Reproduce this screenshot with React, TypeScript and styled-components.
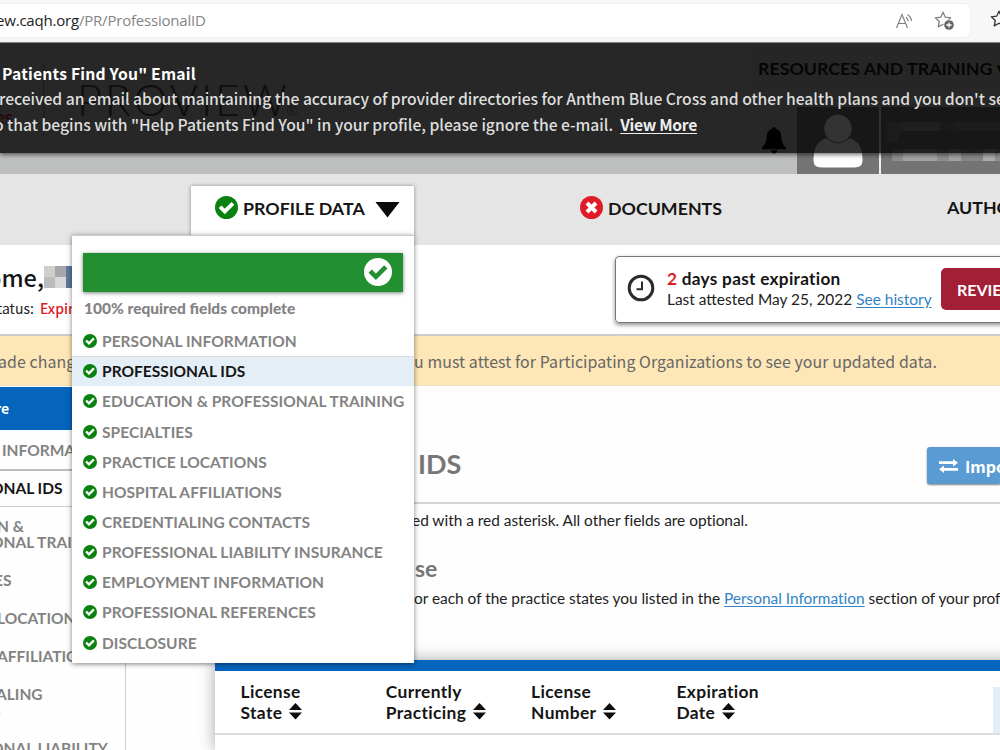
import React from "react";
import styled, { createGlobalStyle, css } from "styled-components";

const GlobalStyle = createGlobalStyle`
  * { box-sizing: border-box; }
  html, body { margin: 0; padding: 0; overflow: hidden; background: #fefefe; }
  body { font-family: Lato, "Liberation Sans", sans-serif; color: #222; }
  svg { flex: none; }
`;

const sourceSans = css`
  font-family: "Noto Sans CJK JP", "Open Sans", sans-serif;
`;

const Page = styled.div`
  width: 1000px;
  height: 750px;
  overflow: hidden;
  display: flex;
  flex-direction: column;
`;

/* Browser chrome */
const BrowserBar = styled.div`
  height: 42px;
  flex: none;
  background: #f7f7f7;
  display: flex;
  align-items: flex-start;
  padding-top: 4px;
`;
const AddressField = styled.div`
  width: 970px;
  height: 33px;
  background: #fff;
  border-radius: 0 5px 5px 0;
  box-shadow: 0 0 2px #ddd;
  display: flex;
  align-items: center;
  justify-content: space-between;
  padding-right: 15px;
`;
const Url = styled.div`
  font: 15px/20px "Open Sans", sans-serif;
  letter-spacing: -0.2px;
  color: #858585;
  margin: 0 0 2px -4px;
  white-space: pre;
  b { font-weight: 400; color: #222; }
`;
const FieldIcons = styled.div`
  display: flex;
  align-items: center;
  gap: 19px;
`;
const EdgeStar = styled.div`
  margin: 6px 0 0 20px;
  width: 10px;
  overflow: hidden;
`;

/* Site header with announcement */
const Header = styled.header`
  position: relative;
  height: 132px;
  flex: none;
  background: #bdc0bf;
  display: flex;
  justify-content: space-between;
  border-top: 1px solid #8b8e8d;
`;
const Brand = styled.div`
  display: flex;
  align-items: flex-start;
`;
const BrandTail = styled.div`
  width: 44px;
  height: 74px;
  margin-top: 20px;
  padding-top: 42px;
  border-right: 1px solid #8a8c8c;
  font: 700 18px/24px Lato, sans-serif;
  color: #a03028;
  text-indent: -5px;
`;
const BrandName = styled.div`
  margin: 34px 0 0 33px;
  font: 300 43px/46px Lato, sans-serif;
  letter-spacing: 2.9px;
  color: #484848;
  white-space: nowrap;
  sup { font-size: 14px; line-height: 0; vertical-align: 0; letter-spacing: 0; margin-left: -3px; }
`;
const HeaderRight = styled.div`
  width: 250px;
  flex: none;
  display: flex;
  flex-direction: column;
  justify-content: space-between;
`;
const Resources = styled.div`
  height: 42px;
  margin-top: 4px;
  padding: 10px 0 0 8px;
  background: #bebebe;
  font: 700 17.8px/22px Lato, sans-serif;
  color: #1c1c1c;
  white-space: nowrap;
`;
const UserArea = styled.div`
  height: 67px;
  display: flex;
`;
const BellBox = styled.div`
  width: 47px;
  flex: none;
  padding: 20px 0 0 11px;
`;
const AvatarBox = styled.div`
  width: 82px;
  flex: none;
  background: #747474;
  display: flex;
  justify-content: center;
  padding-top: 7px;
`;
const AccountBox = styled.div`
  flex: 1;
  min-width: 0;
  overflow: hidden;
  background: #747474;
  padding: 15px 0 0 6px;
`;
const Redacted = styled.div`
  display: flex;
  flex-wrap: wrap;
  width: 120px;
`;
const Block = styled.i<{ $w: number; $h: number; $c: string }>`
  width: ${(p) => p.$w}px;
  height: ${(p) => p.$h}px;
  background: ${(p) => p.$c};
`;
const Divider = styled.div`
  width: 2px;
  flex: none;
  background: #eee;
`;
const Announcement = styled.div`
  position: absolute;
  left: 0;
  right: 0;
  top: 0;
  height: 110px;
  padding: 17.5px 0 0;
  background: rgba(0, 0, 0, 0.8);
  box-shadow: 0 2px 4px rgba(0, 0, 0, 0.5);
  ${sourceSans}
  font-size: 15.7px;
  line-height: 25.9px;
  color: #dedede;
  white-space: pre;
`;
const AnnounceTitle = styled.div`
  font-weight: 700;
  color: #fff;
  padding-left: 2px;
  letter-spacing: 0.2px;
`;
const AnnounceLine = styled.div<{ $x: number }>`
  margin-left: ${(p) => p.$x}px;
  letter-spacing: -0.035px;
  font-weight: 500;
  a { font-weight: 700; color: #eee; letter-spacing: -0.3px; text-decoration: underline; text-underline-offset: 2px; }
`;

/* Primary navigation */
const Nav = styled.nav`
  position: relative;
  height: 71px;
  flex: none;
  background: #e5e5e5;
  display: flex;
  align-items: flex-start;
  font-size: 17.8px;
  line-height: 24px;
  font-weight: 700;
  color: #151515;
`;
const Tab = styled.div`
  margin: 12px 0 0 191px;
  width: 223px;
  flex: none;
  height: 50px;
  background: #fff;
  box-shadow: 0 0 4px rgba(0, 0, 0, 0.4);
  display: flex;
  align-items: flex-start;
  padding: 10px 0 0 24px;
`;
const TabLabel = styled.span`
  margin-left: 5px;
  width: 132px;
  white-space: nowrap;
`;
const NavItem = styled.div<{ $ml: number; $mt: number }>`
  margin: ${(p) => p.$mt}px 0 0 ${(p) => p.$ml}px;
  flex: none;
  display: flex;
  gap: 5px;
  white-space: nowrap;
`;

/* Dropdown */
const Menu = styled.div`
  position: absolute;
  z-index: 2;
  left: 72px;
  top: 61px;
  width: 342px;
  height: 428px;
  background: #fff;
  border-top: 1px solid #ccc;
  box-shadow: 0 1px 5px rgba(0, 0, 0, 0.5);
  padding-top: 17px;
`;
const Progress = styled.div`
  width: 320px;
  height: 39px;
  margin-left: 11px;
  background: #228f30;
  box-shadow: 0 1px 4px rgba(0, 0, 0, 0.5);
  display: flex;
  align-items: center;
  justify-content: flex-end;
  padding: 0 11px 1px 0;
`;
const ProgressText = styled.div`
  margin: 6px 0 11px 12px;
  font-size: 15.5px;
  line-height: 20px;
  color: #838383;
  height: 17px;
  white-space: nowrap;
`;
const MenuItem = styled.div<{ $active?: boolean }>`
  height: 30.17px;
  display: flex;
  align-items: center;
  gap: 5px;
  padding-left: 11px;
  font-size: 15.5px;
  letter-spacing: 0.04px;
  font-weight: 700;
  white-space: nowrap;
  color: ${(p) => (p.$active ? "#151515" : "#838383")};
  background: ${(p) => (p.$active ? "#e4eef7" : "transparent")};
  box-shadow: ${(p) => (p.$active ? "inset 0 1px #d8dde2" : "none")};
`;

/* Welcome strip */
const Welcome = styled.section`
  height: 91px;
  flex: none;
  background: #fff;
  border-bottom: 2px solid #ccc;
  display: flex;
  justify-content: space-between;
`;
const Greeting = styled.div`
  ${sourceSans}
  padding-top: 15px;
  white-space: nowrap;
`;
const Name = styled.div`
  display: flex;
  align-items: center;
  margin-left: -13px;
  height: 34px;
  font-size: 23.5px;
  font-weight: 500;
  color: #151515;
`;
const Status = styled.div`
  font-size: 14px;
  line-height: 20px;
  height: 24px;
  padding-top: 4px;
  margin-left: -3px;
  b { font-weight: 500; color: #dc1c28; margin-left: 3px; }
`;
const Mosaic = styled.div`
  display: flex;
  flex-wrap: wrap;
  width: 33px;
`;
const AttestCard = styled.div`
  width: 400px;
  height: 67px;
  margin: 11px -15px 0 0;
  border: 1px solid #777;
  border-radius: 4px;
  box-shadow: 0 2px 4px rgba(0, 0, 0, 0.45);
  display: flex;
  padding-left: 11px;
`;
const ClockWrap = styled.div`
  padding-top: 17px;
  width: 40px;
  flex: none;
`;
const AttestText = styled.div`
  width: 274px;
  flex: none;
  padding-top: 11px;
  font-size: 15.45px;
  line-height: 21px;
  white-space: nowrap;
`;
const Past = styled.div`
  font-size: 17.2px;
  letter-spacing: 0.3px;
  font-weight: 700;
  color: #151515;
  em { font-style: normal; color: #dc1c28; }
`;
const Link = styled.a`
  color: #3383c6;
  text-decoration: underline;
  text-underline-offset: 2px;
`;
const ReviewButton = styled.div`
  flex: 1;
  height: 42px;
  margin-top: 11px;
  background: #a31f35;
  border-radius: 5px;
  padding-left: 16px;
  font: 700 16px/43px Lato, sans-serif;
  color: #fff;
`;
const Warning = styled.div`
  height: 50px;
  flex: none;
  background: #fee7b7;
  border-bottom: 1px solid #eee0c4;
  display: flex;
  ${sourceSans}
  font-size: 15.9px;
  letter-spacing: 0.09px;
  line-height: 51px;
  color: #666;
  white-space: pre;
`;
const WarnLeft = styled.div`
  width: 414px;
  text-indent: -2px;
`;

/* Body */
const Body = styled.div`
  display: flex;
  flex: 1;
  min-height: 0;
`;
const Sidebar = styled.aside`
  width: 126px;
  flex: none;
  border-right: 1px solid #ccc;
  overflow: hidden;
  font-size: 15.5px;
  line-height: 16px;
  font-weight: 700;
  color: #838383;
  white-space: pre;
`;
const SideHead = styled.div`
  height: 43px;
  margin-top: 1px;
  background: #0565bd;
  color: #fff;
  ${sourceSans}
  font-size: 14px;
  line-height: 43px;
  text-indent: -5px;
`;
const SideItem = styled.div<{ $h: number; $x: number; $active?: boolean }>`
  height: ${(p) => p.$h}px;
  text-indent: ${(p) => p.$x}px;
  display: flex;
  flex-direction: column;
  justify-content: center;
  ${(p) =>
    p.$active &&
    css`
      color: #151515;
      border-top: 2px solid #bbb;
      border-bottom: 1px solid #ccc;
      padding-bottom: 2px;
    `}
`;
const SideLine = styled.div<{ $x?: number }>`
  text-indent: ${(p) => p.$x ?? 0}px;
`;
const Content = styled.main`
  flex: 1;
  min-width: 0;
  display: flex;
  flex-direction: column;
`;
const TitleRow = styled.div`
  height: 118px;
  border-bottom: 2px solid #d4d4d4;
  display: flex;
  justify-content: space-between;
  padding-top: 61px;
`;
const Title = styled.h1`
  margin: 0 0 0 292px;
  font: 700 27px/34px Lato, sans-serif;
  color: #777;
`;
const ImportButton = styled.div`
  width: 73px;
  flex: none;
  height: 37px;
  background: #5a9bd3;
  border-radius: 3px 0 0 3px;
  box-shadow: 0 1px 2px rgba(0, 0, 0, 0.5);
  display: flex;
  align-items: center;
  gap: 7px;
  padding-left: 12px;
  ${sourceSans}
  font-weight: 700;
  font-size: 16px;
  color: #fff;
  overflow: hidden;
`;
const Para = styled.p<{ $mt: number; $x: number; $ls: number }>`
  margin: ${(p) => p.$mt}px 0 0 ${(p) => p.$x}px;
  font-size: 15.45px;
  line-height: 22px;
  letter-spacing: ${(p) => p.$ls}px;
  white-space: nowrap;
`;
const SubTitle = styled.h2`
  margin: 21px 0 1px 289px;
  font: 700 23px/32px Lato, sans-serif;
  color: #777;
`;
const TableCard = styled.div`
  margin: 51px -20px 0 89px;
  flex: 1;
  background: #fff;
  border-top: 11px solid #0565bd;
  box-shadow: 0 0 15px rgba(0, 0, 0, 0.35);
`;
const HeadRow = styled.div`
  height: 64px;
  border-bottom: 2px solid #ddd;
  display: grid;
  grid-template-columns: 145.3px 145.3px 145.3px 317px 40px;
  padding: 10px 0 0 25.5px;
`;
const HeadCell = styled.div`
  font-size: 17.4px;
  letter-spacing: 0.35px;
  line-height: 21.3px;
  font-weight: 700;
  color: #151515;
  svg { margin-left: 7px; }
`;
const ActionCell = styled.div`
  margin-top: 6px;
  background: #e4eef7;
`;

const CheckCircle = ({ size, fill = "#0a820f", mark = "#fff" }: { size: number; fill?: string; mark?: string }) => (
  <svg width={size} height={size} viewBox="0 0 24 24">
    <circle cx="12" cy="12" r="12" fill={fill} />
    <path d="M5.300 11.200l4.900 4.900 8.500-8.500" fill="none" stroke={mark} strokeWidth="4" />
  </svg>
);
const Sort = () => (
  <svg width="13" height="17" viewBox="0 0 13 17" style={{ verticalAlign: -1 }}>
    <path d="M6.500 0L13 7H0zM0 9.500h13L6.500 16.500z" fill="#0c0c0c" />
  </svg>
);
const Star = ({ color }: { color: string }) => (
  <path
    d="M9 1.200l2.300 5 5.400.6-4 3.700 1.100 5.400L9 13.200l-4.800 2.700 1.100-5.400-4-3.700 5.400-.6z"
    fill="none"
    stroke={color}
    strokeWidth="1.300"
    strokeLinejoin="round"
  />
);

const menuItems = [
  "PERSONAL INFORMATION",
  "PROFESSIONAL IDS",
  "EDUCATION & PROFESSIONAL TRAINING",
  "SPECIALTIES",
  "PRACTICE LOCATIONS",
  "HOSPITAL AFFILIATIONS",
  "CREDENTIALING CONTACTS",
  "PROFESSIONAL LIABILITY INSURANCE",
  "EMPLOYMENT INFORMATION",
  "PROFESSIONAL REFERENCES",
  "DISCLOSURE",
];

const columns = [
  ["License", "State"],
  ["Currently", "Practicing"],
  ["License", "Number"],
  ["Expiration", "Date"],
];

export default function App() {
  return (
    <Page>
      <GlobalStyle />
      <BrowserBar>
        <AddressField>
          <Url>
            <b>ew.caqh.org</b>/PR/ProfessionalID
          </Url>
          <FieldIcons>
            <svg width="20" height="18" viewBox="0 0 20 18" fill="none" stroke="#808080" strokeWidth="1.200">
              <path d="M1.500 16L7 2.500 12.500 16M3.400 11.500h7.200M11 5.200q2 1.500 2.200 4M12.500 2.500q3.600 2.400 4 6.500" />
            </svg>
            <svg width="21" height="20" viewBox="0 0 21 20">
              <Star color="#808080" />
              <circle cx="15" cy="14" r="5.600" fill="#fff" />
              <circle cx="15" cy="14" r="4.800" fill="#666" />
              <path d="M15 11.400v5.200M12.400 14h5.200" stroke="#fff" strokeWidth="1.300" />
            </svg>
          </FieldIcons>
        </AddressField>
        <EdgeStar>
          <svg width="20" height="20" viewBox="0 0 20 20">
            <Star color="#333" />
          </svg>
        </EdgeStar>
      </BrowserBar>

      <Header>
        <Brand>
          <BrandTail>es</BrandTail>
          <BrandName>
            PROVIEW<sup>®</sup>
          </BrandName>
        </Brand>
        <HeaderRight>
          <Resources>RESOURCES AND TRAINING ▾</Resources>
          <UserArea>
            <BellBox>
              <svg width="26" height="27" viewBox="0 0 26 27">
                <path
                  d="M13 0c1.200 0 1.800.8 1.800 1.800 4 .9 5.400 4.400 5.600 8.400.2 4.600 1.300 7.400 4.600 10.300v1.700H1v-1.700c3.300-2.900 4.400-5.700 4.600-10.300.2-4 1.600-7.500 5.600-8.400C11.200.8 11.800 0 13 0zM9.800 23.300h6.400c-.3 2-1.500 3.200-3.200 3.200s-2.900-1.200-3.200-3.200z"
                  fill="#080808"
                />
              </svg>
            </BellBox>
            <AvatarBox>
              <svg width="50" height="56" viewBox="0 0 50 56" fill="#fff">
                <circle cx="25" cy="14.500" r="13.700" />
                <path d="M10 25.500q3-2 5.500 0 9.500 7.500 19 0 2.500-2 5.500 0 9.500 5 9.500 19v2q0 7-8 7h-33q-8 0-8-7v-2q0-14 9.500-19z" />
              </svg>
            </AvatarBox>
            <Divider />
            <AccountBox>
              <Redacted>
                <Block $w={13} $h={9} $c="#868686" />
                <Block $w={40} $h={9} $c="#969999" />
                <Block $w={14} $h={9} $c="#7c7c7c" />
                <Block $w={53} $h={9} $c="#8c8e8e" />
                <Block $w={12} $h={11} $c="#8a8a8a" />
                <Block $w={108} $h={11} $c="#757575" />
                <Block $w={120} $h={7} $c="#747474" />
                <Block $w={5} $h={12} $c="#747474" />
                <Block $w={11} $h={12} $c="#8e8e8e" />
                <Block $w={34} $h={12} $c="#a4a4a4" />
                <Block $w={12} $h={12} $c="#8e8e8e" />
                <Block $w={12} $h={12} $c="#a4a4a4" />
                <Block $w={22} $h={12} $c="#888" />
                <Block $w={12} $h={12} $c="#adadad" />
                <Block $w={12} $h={12} $c="#909090" />
              </Redacted>
            </AccountBox>
          </UserArea>
        </HeaderRight>
        <Announcement>
          <AnnounceTitle>Patients Find You" Email</AnnounceTitle>
          <AnnounceLine $x={-1}>
            received an email about maintaining the accuracy of provider directories for Anthem Blue Cross and other health plans and you don't see
          </AnnounceLine>
          <AnnounceLine $x={-6}>
            {'o that begins with "Help Patients Find You" in your profile, please ignore the e-mail.  '}
            <a>View More</a>
          </AnnounceLine>
        </Announcement>
      </Header>

      <Nav>
        <Tab>
          <CheckCircle size={23} />
          <TabLabel>PROFILE DATA</TabLabel>
          <svg width="25" height="16" viewBox="0 0 25 16" style={{ marginTop: 6 }}>
            <path d="M.5 0h24L12.500 15.500z" fill="#0a0a0a" />
          </svg>
        </Tab>
        <NavItem $ml={166} $mt={22}>
          <svg width="23" height="23" viewBox="0 0 24 24">
            <circle cx="12" cy="12" r="12" fill="#de1b26" />
            <path d="M7.300 7.300l9.400 9.400M16.700 7.300l-9.400 9.400" stroke="#fff" strokeWidth="4.200" />
          </svg>
          <span>DOCUMENTS</span>
        </NavItem>
        <NavItem $ml={225} $mt={21}>
          <span>AUTHORIZE</span>
        </NavItem>
        <Menu>
          <Progress>
            <CheckCircle size={28} fill="#fff" mark="#228f30" />
          </Progress>
          <ProgressText>
            <b>100% required fields complete</b>
          </ProgressText>
          {menuItems.map((label) => (
            <MenuItem key={label} $active={label === "PROFESSIONAL IDS"}>
              <CheckCircle size={14} />
              {label}
            </MenuItem>
          ))}
        </Menu>
      </Nav>

      <Welcome>
        <Greeting>
          <Name>
            ome,
            <Mosaic>
              <Block $w={11} $h={11} $c="#cfcfcb" />
              <Block $w={11} $h={11} $c="#a5a7a9" />
              <Block $w={11} $h={11} $c="#60779e" />
              <Block $w={11} $h={11} $c="#bcbcbc" />
              <Block $w={11} $h={11} $c="#d9d9dc" />
              <Block $w={11} $h={11} $c="#60779e" />
            </Mosaic>
          </Name>
          <Status>
            tatus: <b>Expired</b>
          </Status>
        </Greeting>
        <AttestCard>
          <ClockWrap>
            <svg width="28" height="28" viewBox="0 0 28 28" fill="none" stroke="#2b2b2b">
              <circle cx="14" cy="14" r="11.800" strokeWidth="3" />
              <path d="M15 7.500v7.700H9.500" strokeWidth="2" />
            </svg>
          </ClockWrap>
          <AttestText>
            <Past>
              <em>2</em> days past expiration
            </Past>
            Last attested May 25, 2022 <Link>See history</Link>
          </AttestText>
          <ReviewButton>REVIEW</ReviewButton>
        </AttestCard>
      </Welcome>

      <Warning>
        <WarnLeft>ade changes</WarnLeft>
        <span>u must attest for Participating Organizations to see your updated data.</span>
      </Warning>

      <Body>
        <Sidebar>
          <SideHead>re</SideHead>
          <SideItem $h={39} $x={2}>INFORMATION</SideItem>
          <SideItem $h={38} $x={-9} $active>ONAL IDS</SideItem>
          <SideItem $h={54} $x={0}>
            <SideLine $x={-3}>N &amp;</SideLine>
            <SideLine $x={-9}>ONAL TRAINING</SideLine>
          </SideItem>
          <SideItem $h={38} $x={-6}>ES</SideItem>
          <SideItem $h={38} $x={-3}>LOCATIONS</SideItem>
          <SideItem $h={38} $x={-3}>AFFILIATIONS</SideItem>
          <SideItem $h={54} $x={0}>
            <SideLine $x={-4}>ALING</SideLine>
            <SideLine $x={-8}>S</SideLine>
          </SideItem>
          <SideItem $h={38} $x={-9}>ONAL LIABILITY</SideItem>
        </Sidebar>
        <Content>
          <TitleRow>
            <Title>IDS</Title>
            <ImportButton>
              <svg width="19" height="14" viewBox="0 0 19 14" fill="#fff">
                <path d="M0 2.300h14V0l5 3.700-5 3.700V5.100H0zM19 8.900H5V6.600L0 10.300 5 14v-2.300h14z" />
              </svg>
              Import
            </ImportButton>
          </TitleRow>
          <Para $mt={5} $x={286} $ls={-0.02}>
            ed with a red asterisk. All other fields are optional.
          </Para>
          <SubTitle>se</SubTitle>
          <Para $mt={2} $x={288} $ls={-0.02}>
            or each of the practice states you listed in the <Link>Personal Information</Link> section of your profile.
          </Para>
          <TableCard>
            <HeadRow>
              {columns.map(([a, b], i) => (
                <HeadCell key={i}>
                  {a}
                  <br />
                  {b}
                  <Sort />
                </HeadCell>
              ))}
              <ActionCell />
            </HeadRow>
          </TableCard>
        </Content>
      </Body>
    </Page>
  );
}
